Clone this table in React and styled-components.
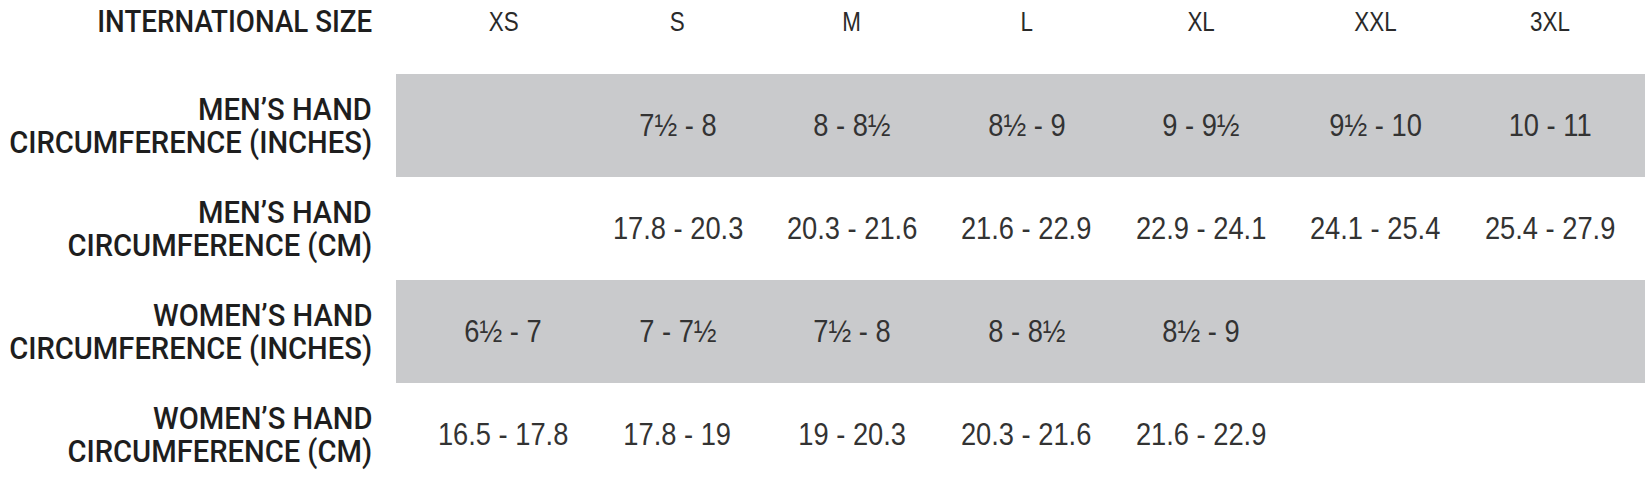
import React from 'react';
import styled, { createGlobalStyle } from 'styled-components';

const GlobalStyle = createGlobalStyle`
	body {
		margin: 0;
		background: #ffffff;
		font-family: "Liberation Sans", Arial, sans-serif;
	}
`;

const StyledChart = styled.div`
	width: 1650px;
	height: 478px;
	overflow: hidden;
	background: #ffffff;
`;

const StyledRow = styled.div`
	display: flex;
	height: ${({ header }) => (header ? '43px' : '103px')};
	margin-bottom: ${({ header }) => (header ? '31px' : '0')};
`;

const StyledLabel = styled.div`
	width: 396px;
	box-sizing: border-box;
	padding-right: 24px;
	display: flex;
	flex-direction: column;
	justify-content: center;
	align-items: flex-end;
	font-family: Roboto, "Liberation Sans", sans-serif;
	font-size: 31px;
	line-height: 33px;
	font-weight: 500;
	color: #1e1e1e;
	& > span {
		display: inline-block;
		white-space: nowrap;
		transform: scaleX(${({ header }) => (header ? 0.895 : 0.94)});
		transform-origin: right center;
	}
`;

const StyledBand = styled.div`
	width: 1249px;
	box-sizing: border-box;
	padding: 0 8px 0 20px;
	display: grid;
	grid-template-columns: repeat(7, 1fr);
	align-items: center;
	background: ${({ shaded }) => (shaded ? '#c9cacc' : 'transparent')};
`;

const StyledCell = styled.div`
	display: flex;
	justify-content: center;
	font-size: ${({ header }) => (header ? '28px' : '31px')};
	color: ${({ header }) => (header ? '#2a2a2a' : '#333333')};
	& > span {
		display: inline-block;
		white-space: nowrap;
		transform: scaleX(${({ header }) => (header ? 0.8 : 0.88)});
		transform-origin: center;
	}
`;

const sizes = ['XS', 'S', 'M', 'L', 'XL', 'XXL', '3XL'];

const rows = [
	{
		label: ['MEN’S HAND', 'CIRCUMFERENCE (INCHES)'],
		shaded: true,
		values: ['', '7½ - 8', '8 - 8½', '8½ - 9', '9 - 9½', '9½ - 10', '10 - 11'],
	},
	{
		label: ['MEN’S HAND', 'CIRCUMFERENCE (CM)'],
		shaded: false,
		values: ['', '17.8 - 20.3', '20.3 - 21.6', '21.6 - 22.9', '22.9 - 24.1', '24.1 - 25.4', '25.4 - 27.9'],
	},
	{
		label: ['WOMEN’S HAND', 'CIRCUMFERENCE (INCHES)'],
		shaded: true,
		values: ['6½ - 7', '7 - 7½', '7½ - 8', '8 - 8½', '8½ - 9', '', ''],
	},
	{
		label: ['WOMEN’S HAND', 'CIRCUMFERENCE (CM)'],
		shaded: false,
		values: ['16.5 - 17.8', '17.8 - 19', '19 - 20.3', '20.3 - 21.6', '21.6 - 22.9', '', ''],
	},
];

function App() {
	return (
		<StyledChart>
			<GlobalStyle />
			<StyledRow header>
				<StyledLabel header>
					<span>INTERNATIONAL SIZE</span>
				</StyledLabel>
				<StyledBand>
					{sizes.map((s) => (
						<StyledCell header key={s}>
							<span>{s}</span>
						</StyledCell>
					))}
				</StyledBand>
			</StyledRow>
			{rows.map((row, i) => (
				<StyledRow key={i}>
					<StyledLabel>
						{row.label.map((line) => (
							<span key={line}>{line}</span>
						))}
					</StyledLabel>
					<StyledBand shaded={row.shaded}>
						{row.values.map((v, j) => (
							<StyledCell key={j}>
								<span>{v}</span>
							</StyledCell>
						))}
					</StyledBand>
				</StyledRow>
			))}
		</StyledChart>
	);
}

export default App;
